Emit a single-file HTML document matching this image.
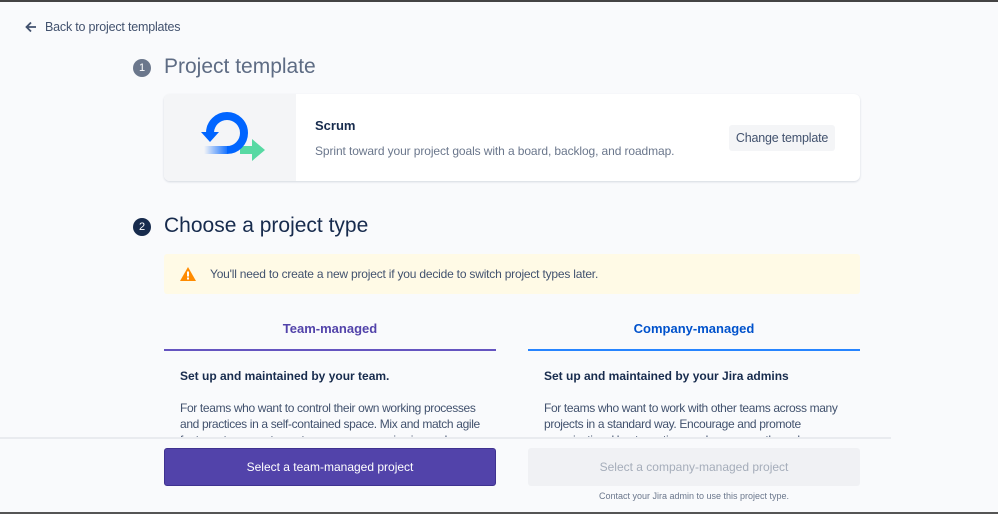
<!DOCTYPE html>
<html><head><meta charset="utf-8"><style>
*{box-sizing:border-box;margin:0;padding:0}
body{width:998px;height:514px;overflow:hidden;background:#f9fafc;font-family:"Liberation Sans",sans-serif;color:#172b4d;position:relative}
.abs{position:absolute}
.topline{left:0;top:0;width:998px;height:2px;background:#444}
.botline{left:0;top:512px;width:998px;height:2px;background:#555}
.back{left:25px;top:20px;font-size:12.5px;color:#42526e;display:flex;align-items:center;gap:8px;letter-spacing:-0.2px}
.step{width:18px;height:18px;border-radius:50%;color:#fff;font-size:11px;display:flex;align-items:center;justify-content:center}
h1{font-weight:normal;font-size:21px}
.card{left:164px;top:94px;width:696px;height:87px;background:#fff;border-radius:6px;box-shadow:0 1px 2px rgba(9,30,66,.15);overflow:hidden}
.card .ic{position:absolute;left:0;top:0;width:132px;height:87px;background:#f4f5f7}
.btn{left:729px;top:125px;width:106px;height:26px;background:#f4f5f7;border-radius:3px;font-size:12.5px;color:#42526e;display:flex;align-items:center;justify-content:center;letter-spacing:-0.2px}
.warn{left:164px;top:254px;width:696px;height:40px;background:#fffae6;border-radius:3px;font-size:12px;color:#42526e;display:flex;align-items:center;padding-left:16px;gap:14px;letter-spacing:-0.2px}
.tab{top:321px;width:332px;text-align:center;font-size:13px;font-weight:bold}
.p{font-size:12px;line-height:16px;color:#42526e;letter-spacing:-0.35px}
.footer{left:0;top:437px;width:891px;height:75px;background:#f9fafc;border-top:2px solid #e9ebef}
.b{top:448px;width:332px;height:38px;border-radius:3px;font-size:12px;display:flex;align-items:center;justify-content:center}
</style></head><body>
<div class="abs topline"></div>
<div class="abs back"><svg width="12" height="12" viewBox="0 0 12 12"><path d="M11 6H2M6 1.5L1.5 6 6 10.5" stroke="#42526e" stroke-width="1.8" fill="none"/></svg>Back to project templates</div>
<div class="abs step" style="left:133px;top:59px;background:#6b778c">1</div>
<h1 class="abs" style="left:164px;top:55px;color:#5e6c84">Project template</h1>
<div class="abs card"><div class="ic">
<svg width="132" height="87" viewBox="0 0 132 87"><defs><linearGradient id="g" x1="40" y1="0" x2="66" y2="0" gradientUnits="userSpaceOnUse"><stop offset="0" stop-color="#0065ff" stop-opacity="0"/><stop offset="1" stop-color="#0065ff"/></linearGradient></defs>
<path d="M76 52h12v-7l13 11-13 11v-7H76z" fill="#57d9a3"/>
<path d="M40 56H63" stroke="url(#g)" stroke-width="8" fill="none"/>
<path d="M63 56A17 17 0 1 0 46 39" stroke="#0065ff" stroke-width="8" fill="none"/>
<path d="M37 38h18l-9 10z" fill="#0065ff"/>
</svg></div>
<div style="position:absolute;left:151px;top:24px;font-size:13px;font-weight:bold;color:#172b4d">Scrum</div>
<div style="position:absolute;left:151px;top:50px;font-size:12px;color:#6b778c;letter-spacing:-0.1px">Sprint toward your project goals with a board, backlog, and roadmap.</div></div>
<div class="abs btn">Change template</div>
<div class="abs step" style="left:133px;top:218px;background:#172b4d">2</div>
<h1 class="abs" style="left:164px;top:214px">Choose a project type</h1>
<div class="abs warn"><svg width="16" height="14" viewBox="0 0 16 14"><path d="M8 0L16 14H0z" fill="#ff8b00"/><rect x="7" y="4.5" width="2" height="5" fill="#fff"/><rect x="7" y="10.5" width="2" height="2" fill="#fff"/></svg>You'll need to create a new project if you decide to switch project types later.</div>
<div class="abs tab" style="left:164px;color:#5243aa">Team-managed</div>
<div class="abs" style="left:164px;top:349px;width:332px;height:2px;background:#6554c0"></div>
<div class="abs tab" style="left:528px;color:#0052cc">Company-managed</div>
<div class="abs" style="left:528px;top:349px;width:332px;height:2px;background:#2684ff"></div>
<div class="abs" style="left:180px;top:369px;font-size:12px;font-weight:bold">Set up and maintained by your team.</div>
<div class="abs" style="left:544px;top:369px;font-size:12px;font-weight:bold">Set up and maintained by your Jira admins</div>
<div class="abs p" style="left:180px;top:400px;width:300px">For teams who want to control their own working processes and practices in a self-contained space. Mix and match agile features to support your team as you grow in size and</div>
<div class="abs p" style="left:544px;top:400px;width:295px">For teams who want to work with other teams across many projects in a standard way. Encourage and promote organizational best practices and processes through a shared</div>
<div class="abs footer"></div>
<div class="abs b" style="left:164px;background:#5243aa;color:#fff;border:1px solid #3f3290">Select a team-managed project</div>
<div class="abs b" style="left:528px;background:#f0f1f4;color:#a5adba">Select a company-managed project</div>
<div class="abs" style="left:528px;top:491px;width:332px;text-align:center;font-size:9px;color:#6b778c">Contact your Jira admin to use this project type.</div>
<div class="abs botline"></div>
</body></html>
